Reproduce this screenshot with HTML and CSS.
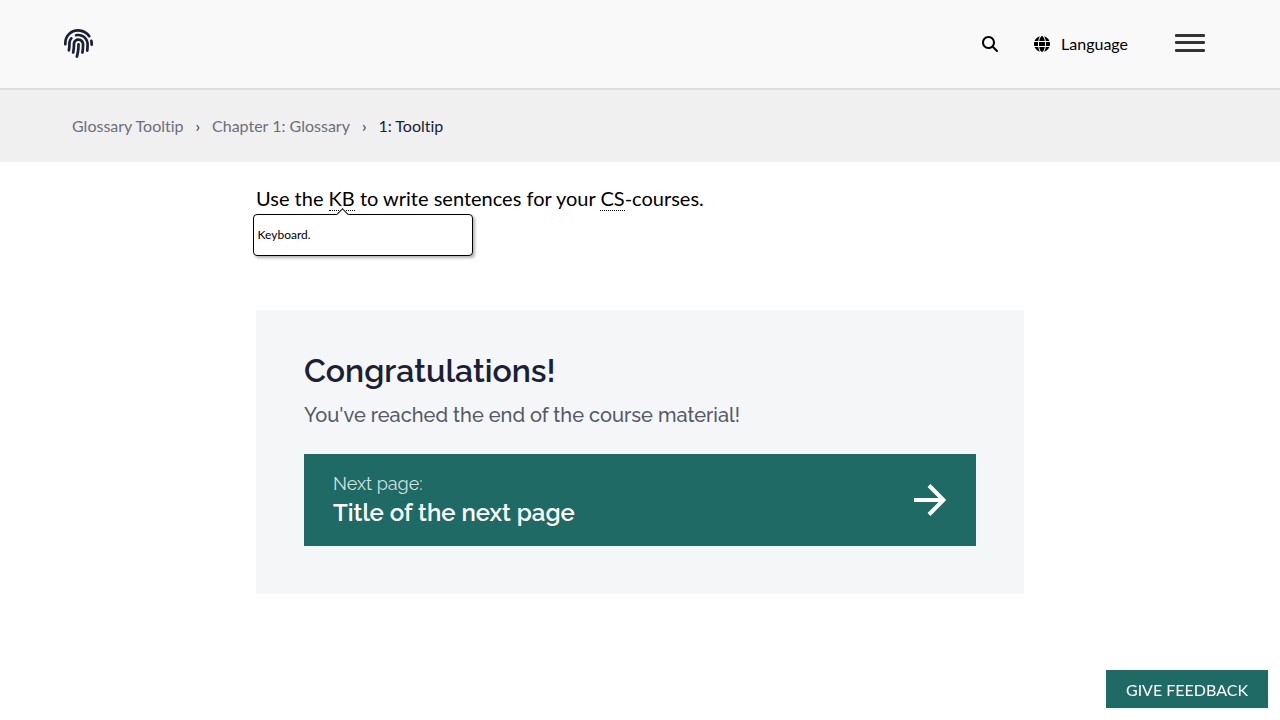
FILE: index.html
```html
<!DOCTYPE html>
<html lang="en">
<head>
<meta charset="utf-8">
<meta name="viewport" content="width=device-width, initial-scale=1">
<title>1: Tooltip</title>
<link rel="stylesheet" href="styles.css">
</head>
<body>
<header class="site-header">
  <a class="logo" href="#" aria-label="Home">
    <svg viewBox="0 0 512 512" aria-hidden="true"><path d="M256.12 245.96c-13.25 0-24 10.74-24 24 1.14 72.25-8.14 141.9-27.7 211.55-2.73 9.72 2.15 30.49 23.12 30.49 10.48 0 20.11-6.92 23.09-17.52 13.53-47.91 31.04-125.41 29.48-224.52.01-13.25-10.73-24-23.99-24zm-.86-81.73C194 164.16 151.25 211.3 152.1 265.32c.75 47.94-3.75 95.91-13.37 142.55-2.69 12.98 5.67 25.69 18.64 28.36 13.05 2.67 25.67-5.66 28.36-18.64 10.34-50.09 15.17-101.58 14.37-153.02-.41-25.95 19.92-52.49 54.45-52.34 31.31.47 57.15 25.34 57.62 55.47.77 48.05-2.81 96.33-10.61 143.55-2.17 13.06 6.69 25.42 19.76 27.58 19.97 3.33 26.81-15.1 27.58-19.77 8.28-50.03 12.06-101.21 11.27-152.11-.88-55.8-47.94-101.88-104.91-102.72zm-110.69-19.78c-10.3-8.34-25.37-6.8-33.76 3.48-25.62 31.5-39.39 71.28-38.75 112 .59 37.58-2.47 75.27-9.11 112.05-2.34 13.05 6.31 25.53 19.36 27.89 20.11 3.5 27.07-14.81 27.89-19.36 7.19-39.84 10.5-80.66 9.86-121.33-.47-29.88 9.2-57.88 28-80.97 8.35-10.28 6.79-25.39-3.49-33.76zm109.47-62.33c-15.41-.41-30.87 1.44-45.78 4.97-12.89 3.06-20.87 15.98-17.83 28.89 3.06 12.89 16 20.83 28.89 17.83 11.05-2.61 22.47-3.77 34-3.69 75.43 1.13 137.73 61.5 138.88 134.58.59 37.88-1.28 76.11-5.58 113.63-1.5 13.17 7.95 25.08 21.11 26.58 16.72 1.95 25.51-11.88 26.58-21.11a929.06 929.06 0 0 0 5.89-119.85c-1.56-98.75-85.07-180.33-186.16-181.83zm252.07 121.45c-2.86-12.92-15.51-21.2-28.61-18.27-12.94 2.86-21.12 15.66-18.26 28.61 4.71 21.41 4.91 37.41 4.7 61.6-.11 13.27 10.55 24.09 23.8 24.2h.2c13.17 0 23.89-10.61 24-23.8.18-22.18.4-44.11-5.83-72.34zm-40.12-90.72C417.29 43.46 337.6 1.29 252.81.02 183.02-.82 118.47 24.91 70.46 72.94 24.09 119.37-.9 181.04.14 246.65l-.12 21.47c-.39 13.25 10.03 24.31 23.28 24.69.23.02.48.02.72.02 12.92 0 23.59-10.3 23.97-23.3l.16-23.64c-.83-52.5 19.16-101.86 56.28-139 38.76-38.8 91.34-59.67 147.68-58.86 69.45 1.03 134.73 35.56 174.62 92.39 7.61 10.86 22.56 13.45 33.42 5.86 10.84-7.62 13.46-22.59 5.84-33.43z"/></svg>
  </a>
  <div class="header-tools">
    <button class="tool" type="button" aria-label="Search">
      <svg class="icon" viewBox="0 0 512 512" aria-hidden="true"><path d="M416 208c0 45.9-14.9 88.3-40 122.7L502.6 457.4c12.5 12.5 12.5 32.8 0 45.3s-32.8 12.5-45.3 0L330.7 376c-34.4 25.2-76.8 40-122.7 40C93.1 416 0 322.9 0 208S93.1 0 208 0S416 93.1 416 208zM208 352a144 144 0 1 0 0-288 144 144 0 1 0 0 288z"/></svg>
    </button>
    <button class="tool language" type="button">
      <svg class="icon" viewBox="0 0 512 512" aria-hidden="true"><path d="M352 256c0 22.2-1.2 43.6-3.3 64H163.3c-2.2-20.4-3.3-41.8-3.3-64s1.2-43.6 3.3-64H348.7c2.2 20.4 3.3 41.8 3.3 64zm28.8-64H503.9c5.3 20.5 8.1 41.9 8.1 64s-2.8 43.5-8.1 64H380.8c2.1-20.6 3.2-42 3.2-64s-1.1-43.4-3.2-64zm112.6-32H376.7c-10-63.9-29.8-117.4-55.3-151.6c78.3 20.7 142 77.5 171.9 151.6zm-149.1 0H167.7c6.1-36.4 15.5-68.6 27-94.7c10.5-23.6 22.2-40.7 33.5-51.5C239.4 3.2 248.7 0 256 0s16.6 3.2 27.8 13.8c11.3 10.8 23 27.9 33.5 51.5c11.6 26 20.9 58.2 27 94.7zm-209 0H18.6C48.6 85.9 112.2 29.1 190.6 8.4C165.1 42.6 145.3 96.1 135.3 160zM8.1 192H131.2c-2.1 20.6-3.2 42-3.2 64s1.1 43.4 3.2 64H8.1C2.8 299.5 0 278.1 0 256s2.8-43.5 8.1-64zM194.7 446.6c-11.6-26-20.9-58.2-27-94.6H344.3c-6.1 36.4-15.5 68.6-27 94.6c-10.5 23.6-22.2 40.7-33.5 51.5C272.6 508.8 263.3 512 256 512s-16.6-3.2-27.8-13.8c-11.3-10.8-23-27.9-33.5-51.5zM135.3 352c10 63.9 29.8 117.4 55.3 151.6C112.2 482.9 48.6 426.1 18.6 352H135.3zm358.1 0c-30 74.1-93.6 130.9-171.9 151.6c25.5-34.2 45.2-87.7 55.3-151.6H493.4z"/></svg>
      <span>Language</span>
    </button>
    <button class="tool menu" type="button" aria-label="Menu">
      <svg class="menu-icon" viewBox="0 0 30 18" aria-hidden="true"><rect width="30" height="3" rx="1"/><rect y="7" width="30" height="3" rx="1"/><rect y="15" width="30" height="3" rx="1"/></svg>
    </button>
  </div>
</header>
<nav class="breadcrumbs" aria-label="Breadcrumb">
  <a href="#">Glossary Tooltip</a>
  <span class="separator">›</span>
  <a href="#">Chapter 1: Glossary</a>
  <span class="separator">›</span>
  <span class="current" aria-current="page">1: Tooltip</span>
</nav>
<main class="content">
  <p class="sentence">Use the <span class="term" tabindex="0" aria-describedby="kb-tip">KB<span class="tooltip" role="tooltip" id="kb-tip">Keyboard.</span></span> to write sentences for your <span class="term" tabindex="0">CS</span>-courses.</p>
  <section class="course-end">
    <h1 class="end-title">Congratulations!</h1>
    <p class="end-text">You've reached the end of the course material!</p>
    <a class="next-page" href="#">
      <span class="next-copy">
        <span class="next-label">Next page:</span>
        <span class="next-title">Title of the next page</span>
      </span>
      <svg class="arrow" viewBox="0 0 32 32" aria-hidden="true"><path d="M0 16H29M15 1.500L29.500 16L15 30.500"/></svg>
    </a>
  </section>
</main>
<button class="feedback" type="button">GIVE FEEDBACK</button>
</body>
</html>
```

FILE: styles.css
```css
* {
  box-sizing: border-box;
}

body {
  margin: 0;
  background: #fff;
  color: #000;
  font: 16px/24px Lato, sans-serif;
  font-variant-ligatures: none;
}

a {
  color: inherit;
  text-decoration: none;
}

button {
  border: 0;
  font: inherit;
  cursor: pointer;
}

.site-header {
  display: flex;
  align-items: center;
  justify-content: space-between;
  min-height: 90px;
  padding: 0 75px 2px 64px;
  background: #f9f9f9;
  border-bottom: 2px solid #ddd;
}

.logo svg {
  display: block;
  width: 29px;
  height: 29px;
  fill: #1a2035;
}

.header-tools {
  display: flex;
  align-items: center;
}

.tool {
  display: flex;
  align-items: center;
  padding: 2px 0 0;
  background: none;
  color: #000;
}

.language {
  gap: 11px;
  margin: 0 47px 0 36px;
}

.menu {
  padding: 0;
}

.icon {
  width: 16px;
  height: 16px;
}

.menu-icon {
  width: 30px;
  height: 18px;
  fill: #333;
}

.breadcrumbs {
  display: flex;
  gap: 12px;
  padding: 24px 72px;
  background: #f0f0f0;
  color: #6b6f7b;
}

.separator {
  color: #333;
}

.current {
  color: #1a2035;
}

.content {
  width: 60%;
  margin: 0 auto;
  padding: 21px 0 64px;
}

.sentence {
  margin: 0 0 97px;
  font-size: 20px;
  line-height: 30px;
}

.term {
  position: relative;
  display: inline-block;
  line-height: 24px;
  border-bottom: 1px dotted #000;
}

.tooltip {
  position: absolute;
  top: 28px;
  left: -76px;
  width: 220px;
  padding: 12px 4px;
  background: #fff;
  border: 1px solid #000;
  border-radius: 4px;
  box-shadow: 2px 2px 3px rgba(0, 0, 0, 0.3);
  font-size: 12px;
  line-height: 16px;
}

.tooltip::before {
  content: "";
  position: absolute;
  top: -5px;
  left: 84px;
  width: 8px;
  height: 8px;
  background: #fff;
  border: solid #000;
  border-width: 1px 0 0 1px;
  transform: rotate(45deg);
}

.course-end {
  padding: 40px 48px 48px;
  background: #f4f6f8;
  font-family: Raleway, "Open Sans", sans-serif;
}

.end-title {
  margin: 0 0 8px;
  color: #1a2035;
  font-size: 32px;
  font-weight: 600;
  line-height: 42px;
}

.end-text {
  margin: 0 0 24px;
  color: #555966;
  font-size: 20px;
  font-weight: 500;
  line-height: 30px;
}

.next-page {
  display: flex;
  align-items: center;
  justify-content: space-between;
  padding: 17px 30px 17px 29px;
  background: #1f6a64;
  color: #fff;
}

.next-copy {
  display: grid;
}

.next-label {
  color: #d2e1e0;
  font-size: 18px;
  line-height: 26px;
}

.next-title {
  font-size: 24px;
  font-weight: 600;
  line-height: 32px;
}

.arrow {
  width: 32px;
  height: 32px;
  fill: none;
  stroke: #fff;
  stroke-width: 4;
}

.feedback {
  position: fixed;
  right: 12px;
  bottom: 12px;
  padding: 8px 20px 6px;
  background: #1f6a64;
  box-shadow: 0 0 0 2px #f9f9f9;
  color: #fff;
}
```
